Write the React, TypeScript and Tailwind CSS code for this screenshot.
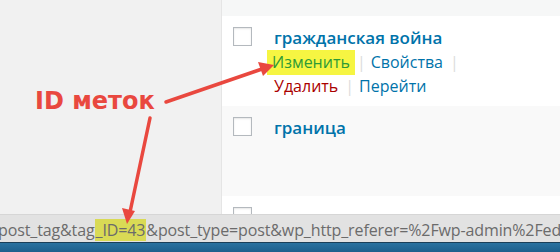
import React from 'react'

function Checkbox() {
  return (
    <div className="h-[19px] w-[19px] shrink-0 border border-[#b4b9be] bg-white shadow-[inset_0_1px_2px_rgba(0,0,0,0.1)]" />
  )
}

function Sep() {
  return <span className="pl-[7px] pr-[5px] text-[#dcdcdc]">|</span>
}

function TagRow({ name, bg, children }: { name?: string; bg: string; children?: React.ReactNode }) {
  return (
    <div className={`flex h-[90px] shrink-0 gap-[22px] pl-[11px] pt-[11px] ${bg}`}>
      <Checkbox />
      <div>
        {name && <div className="text-[17px] leading-[21px] font-semibold text-[#0073aa]">{name}</div>}
        {children}
      </div>
    </div>
  )
}

export default function App() {
  return (
    <div className="relative h-[252px] w-[560px] overflow-hidden bg-[#f1f1f1] font-['Open_Sans',sans-serif]">
      <div className="flex h-[214px] overflow-hidden">
        <div className="w-[222px] shrink-0 border-r border-[#e5e5e5] bg-[#f1f1f1]" />
        <div className="flex flex-1 flex-col">
          <div className="h-[16px] shrink-0 bg-[#f6f7f7]" />
          <TagRow name="гражданская война" bg="bg-white">
            <div className="mt-[2px] -ml-[7px] flex items-center text-[16px] leading-[25px]">
              <span className="-mr-[5px] bg-[#f6f542] px-[5px] text-[#2e9a36]">Изменить</span>
              <Sep />
              <span className="text-[#0073aa]">Свойства</span>
              <Sep />
            </div>
            <div className="flex items-center text-[16px] leading-[22px]">
              <span className="text-[#a00]">Удалить</span>
              <Sep />
              <span className="text-[#0073aa]">Перейти</span>
            </div>
          </TagRow>
          <TagRow name="граница" bg="bg-[#f9f9f9]" />
          <TagRow bg="bg-white" />
        </div>
      </div>

      <div className="h-[28px] overflow-hidden whitespace-nowrap border-t border-[#d6d6d6] bg-[#e2e2e2] text-[16px] leading-[30px] tracking-[-0.12px] text-[#6b6b6b]">
        <span className="-ml-[2px]">post_tag&amp;tag</span>
        <span className="bg-[#d9da55] px-[1px]">_ID=43</span>
        <span>&amp;post_type=post&amp;wp_http_referer=%2Fwp-admin%2Fedit-tags.php</span>
      </div>
      <div className="h-[10px] border-t border-[#1b3f58] bg-gradient-to-b from-[#2a72a0] to-[#1d5f8c]" />

      <div className="absolute left-[35px] top-[86px] font-['DejaVu_Sans',sans-serif] text-[24px] font-bold leading-[30px] text-[#e9483f]">
        ID меток
      </div>

      <svg className="pointer-events-none absolute inset-0" width="560" height="252" viewBox="0 0 560 252">
        <g stroke="#e9483f" strokeWidth="3.5" strokeLinecap="round" fill="#e9483f">
          <line x1="166" y1="102" x2="262" y2="69" />
          <polygon points="274,65 258,62 263,76" stroke="none" />
          <line x1="150" y1="118" x2="130" y2="212" />
          <polygon points="127,224 122,208 135,211" stroke="none" />
        </g>
      </svg>
    </div>
  )
}
